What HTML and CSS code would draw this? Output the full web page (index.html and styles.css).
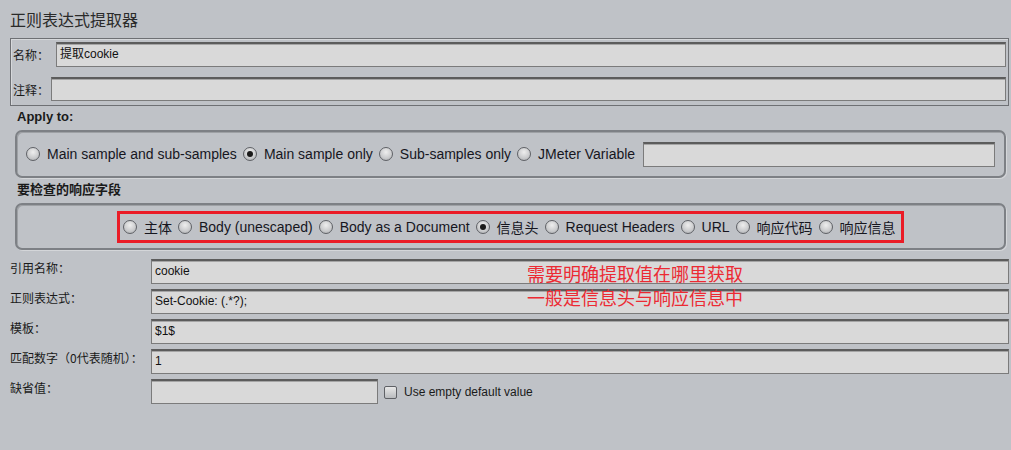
FILE: index.html
```html
<!DOCTYPE html>
<html lang="zh">
<head>
<meta charset="utf-8">
<link rel="stylesheet" href="styles.css">
</head>
<body>
<div class="page">
  <h1 class="title">正则表达式提取器</h1>
  <div class="panel">
    <div class="prow">
      <span class="plabel">名称：</span>
      <div class="field name-field">提取cookie</div>
    </div>
    <div class="prow">
      <span class="plabel">注释：</span>
      <div class="field"></div>
    </div>
  </div>

  <div class="legend">Apply to:</div>
  <div class="group">
    <div class="radios">
      <span class="radio"><i class="dot"></i>Main sample and sub-samples</span>
      <span class="radio"><i class="dot on"></i>Main sample only</span>
      <span class="radio"><i class="dot"></i>Sub-samples only</span>
      <span class="radio"><i class="dot"></i>JMeter Variable</span>
      <div class="field var-field"></div>
    </div>
  </div>

  <div class="legend legend2">要检查的响应字段</div>
  <div class="group group2">
    <div class="redbox">
      <span class="radio"><i class="dot"></i>主体</span>
      <span class="radio"><i class="dot"></i>Body (unescaped)</span>
      <span class="radio"><i class="dot"></i>Body as a Document</span>
      <span class="radio"><i class="dot on"></i>信息头</span>
      <span class="radio"><i class="dot"></i>Request Headers</span>
      <span class="radio"><i class="dot"></i>URL</span>
      <span class="radio"><i class="dot"></i>响应代码</span>
      <span class="radio"><i class="dot"></i>响应信息</span>
    </div>
  </div>

  <div class="form">
    <div class="frow"><span class="flabel">引用名称：</span><div class="field">cookie</div></div>
    <div class="frow"><span class="flabel">正则表达式：</span><div class="field">Set-Cookie: (.*?);</div></div>
    <div class="frow"><span class="flabel">模板：</span><div class="field">$1$</div></div>
    <div class="frow"><span class="flabel">匹配数字（0代表随机）：</span><div class="field">1</div></div>
    <div class="frow"><span class="flabel">缺省值：</span><div class="field short"></div>
      <span class="check"><i class="box"></i>Use empty default value</span>
    </div>
    <div class="note">需要明确提取值在哪里获取<br>一般是信息头与响应信息中</div>
  </div>
</div>
</body>
</html>
```

FILE: styles.css
```css
html, body {
  margin: 0;
  padding: 0;
  background: #bfc2c7;
}
body {
  font-family: "Liberation Sans", Arial, "Noto Sans CJK SC", sans-serif;
  color: #1a1a1a;
  width: 1011px;
  height: 450px;
  overflow: hidden;
}
.page {
  padding: 10px 2px 0 10px;
}
.title {
  margin: 0 0 9px 0;
  font-family: "Noto Sans CJK SC", sans-serif;
  font-weight: normal;
  font-size: 16px;
  line-height: 19px;
  color: #2a2a2a;
}
.panel {
  border: 1px solid #6e7074;
  box-shadow: inset 1px 1px 0 #d6d8db;
  padding: 3px 2px 3px 2px;
  display: flex;
  flex-direction: column;
  gap: 10px;
  height: 60px;
}
.prow {
  display: flex;
  align-items: center;
}
.plabel {
  font-family: "Noto Sans CJK SC", sans-serif;
  font-size: 12px;
  width: 43px;
  flex: none;
}
.prow + .prow .plabel {
  width: 38px;
}
.field {
  flex: 1;
  height: 25px;
  box-sizing: border-box;
  background: #d9d9d9;
  border: 1px solid #7b7b7b;
  border-top: 2px solid #5c5c5c;
  box-shadow: inset 0 1px 0 #a5a5a5;
  font-family: "Liberation Sans", Arial, "Noto Sans CJK SC", sans-serif;
  font-size: 12px;
  line-height: 21px;
  padding-left: 3px;
  color: #111;
}
.prow + .prow .field {
  height: 24px;
}
.legend {
  font-weight: bold;
  font-size: 13px;
  line-height: 16px;
  padding-left: 7px;
  margin-top: 3px;
  margin-bottom: 5px;
  font-family: "Liberation Sans", "Noto Sans CJK SC", sans-serif;
}
.legend2 {
  margin-top: 4px;
}
.group {
  margin-left: 5px;
  margin-right: 3px;
  height: 48px;
  box-sizing: border-box;
  border: 2px solid #7d8085;
  border-radius: 7px;
  box-shadow: inset 1px 1px 0 #9ea1a5, 1px 1px 0 #d4d6d9;
  display: flex;
  align-items: center;
}
.radios {
  display: flex;
  align-items: center;
  padding-left: 9px;
  width: 100%;
  padding-right: 9px;
  box-sizing: border-box;
}
.radio {
  display: inline-flex;
  align-items: center;
  font-size: 14px;
  white-space: nowrap;
  margin-right: 6px;
  font-family: "Liberation Sans", Arial, "Noto Sans CJK SC", sans-serif;
  color: #16161e;
}
.dot {
  width: 12px;
  height: 12px;
  border-radius: 50%;
  border: 1px solid #5f6166;
  background: radial-gradient(circle at 50% 35%, #eeeeee 0%, #c9cacc 60%, #a5a7aa 100%);
  margin-right: 7px;
  position: relative;
  flex: none;
}
.dot.on::after {
  content: "";
  position: absolute;
  left: 3px;
  top: 3px;
  width: 6px;
  height: 6px;
  border-radius: 50%;
  background: #1a1a1a;
}
.var-field {
  height: 25px;
  margin-left: 2px;
}
.group2 {
  height: 47px;
}
.redbox {
  margin-left: 100px;
  height: 32px;
  box-sizing: border-box;
  border: 3px solid #ea1c27;
  display: flex;
  align-items: center;
  padding-left: 3px;
}
.redbox .radio:last-child {
  margin-right: 5px;
}
.form {
  position: relative;
  margin-top: 9px;
  display: flex;
  flex-direction: column;
  gap: 5px;
}
.frow {
  display: flex;
  align-items: flex-start;
}
.flabel {
  width: 141px;
  flex: none;
  font-family: "Noto Sans CJK SC", sans-serif;
  font-size: 12px;
  line-height: 16px;
  padding-top: 1px;
}
.field.short {
  flex: none;
  width: 227px;
}
.check {
  display: inline-flex;
  align-items: center;
  font-size: 12px;
  margin-left: 6px;
  margin-top: 6px;
}
.box {
  width: 11px;
  height: 11px;
  border: 1px solid #5f6166;
  border-radius: 2px;
  background: linear-gradient(#e8e8e8, #b9bbbe);
  margin-right: 7px;
}
.note {
  position: absolute;
  left: 517px;
  top: 2px;
  color: #ec2a33;
  font-family: "Noto Sans CJK SC", sans-serif;
  font-size: 18px;
  line-height: 24px;
}
```
